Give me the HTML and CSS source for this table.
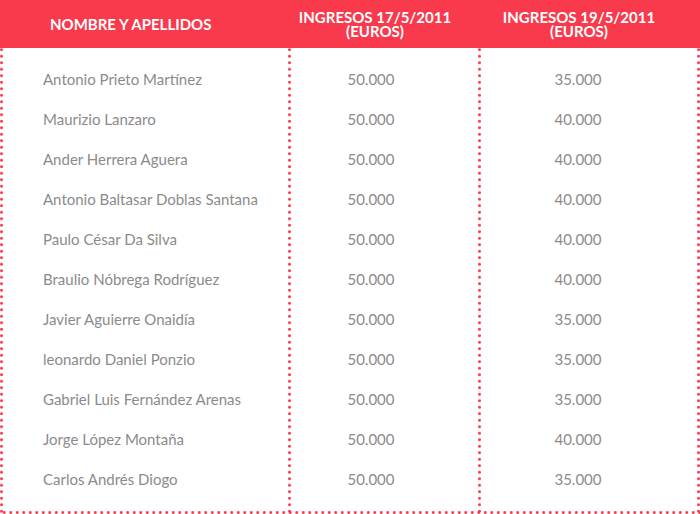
FILE: index.html
```html
<!DOCTYPE html>
<html lang="es">
<head>
<meta charset="utf-8">
<title>Ingresos</title>
<link rel="stylesheet" href="styles.css">
</head>
<body>
<div class="table">
  <div class="th th-name">NOMBRE Y APELLIDOS</div>
  <div class="th th-a">INGRESOS 17/5/2011<br>(EUROS)</div>
  <div class="th th-b">INGRESOS 19/5/2011<br>(EUROS)</div>

  <div class="td name first">Antonio Prieto Martínez</div><div class="td a first">50.000</div><div class="td b first">35.000</div>
  <div class="td name">Maurizio Lanzaro</div><div class="td a">50.000</div><div class="td b">40.000</div>
  <div class="td name">Ander Herrera Aguera</div><div class="td a">50.000</div><div class="td b">40.000</div>
  <div class="td name">Antonio Baltasar Doblas Santana</div><div class="td a">50.000</div><div class="td b">40.000</div>
  <div class="td name">Paulo César Da Silva</div><div class="td a">50.000</div><div class="td b">40.000</div>
  <div class="td name">Braulio Nóbrega Rodríguez</div><div class="td a">50.000</div><div class="td b">40.000</div>
  <div class="td name">Javier Aguierre Onaidía</div><div class="td a">50.000</div><div class="td b">35.000</div>
  <div class="td name">leonardo Daniel Ponzio</div><div class="td a">50.000</div><div class="td b">35.000</div>
  <div class="td name">Gabriel Luis Fernández Arenas</div><div class="td a">50.000</div><div class="td b">35.000</div>
  <div class="td name">Jorge López Montaña</div><div class="td a">50.000</div><div class="td b">40.000</div>
  <div class="td name last">Carlos Andrés Diogo</div><div class="td a last">50.000</div><div class="td b last">35.000</div>
</div>
</body>
</html>
```

FILE: styles.css
```css
html, body {
  margin: 0;
  padding: 0;
  background: #ffffff;
}

body {
  font-family: Lato, "Open Sans", sans-serif;
}

.table {
  display: grid;
  grid-template-columns: 288px 190px 222px;
  width: 700px;
  --dot: radial-gradient(circle, #f9394c 1.1px, rgba(249, 57, 76, 0) 1.7px);
}

.th {
  background: #f9394c;
  color: #ffffff;
  font-weight: 700;
  font-size: 15px;
  line-height: 14.5px;
  height: 48px;
  display: flex;
  align-items: center;
  justify-content: center;
  text-align: center;
  box-sizing: border-box;
}

.th-name {
  justify-content: flex-start;
  padding-left: 50px;
}

.th-a {
  padding-right: 16px;
}

.th-b {
  padding-right: 20px;
}

.td {
  font-size: 15px;
  color: #8b8b8b;
  height: 40px;
  line-height: 40px;
  box-sizing: content-box;
  background-image: var(--dot);
  background-size: 3px 6.5px;
  background-repeat: repeat-y;
  background-attachment: fixed;
}

.td.name {
  padding-left: 43px;
  background-position: 0 1px;
}

.td.a {
  text-align: center;
  padding-right: 24px;
  background-position: 288px 1px;
}

.td.b {
  text-align: center;
  padding-right: 22px;
  background-image: var(--dot), var(--dot);
  background-size: 3px 6.5px, 3px 6.5px;
  background-repeat: repeat-y, repeat-y;
  background-position: 478px 1px, 697px 1px;
}

.td.first {
  padding-top: 11px;
}

.td.last {
  padding-bottom: 15px;
}

.td.name.last {
  background-image: var(--dot), var(--dot);
  background-size: 3px 6.5px, 6.5px 3px;
  background-repeat: repeat-y, repeat-x;
  background-position: 0 1px, 1px 511px;
}

.td.a.last {
  background-image: var(--dot), var(--dot);
  background-size: 3px 6.5px, 6.5px 3px;
  background-repeat: repeat-y, repeat-x;
  background-position: 288px 1px, 1px 511px;
}

.td.b.last {
  background-image: var(--dot), var(--dot), var(--dot);
  background-size: 3px 6.5px, 3px 6.5px, 6.5px 3px;
  background-repeat: repeat-y, repeat-y, repeat-x;
  background-position: 478px 1px, 697px 1px, 1px 511px;
}
```
